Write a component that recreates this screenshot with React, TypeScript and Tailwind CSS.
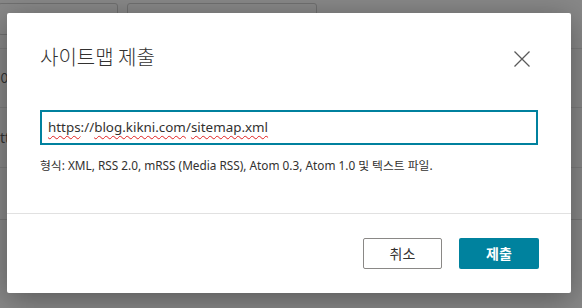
const wavy = "underline decoration-wavy decoration-[#e02020] decoration-1 underline-offset-[3px]";

export default function App() {
    return (
        <div className="relative w-[582px] h-[308px] overflow-hidden bg-[#888888] font-['Noto_Sans','Noto_Sans_CJK_KR',sans-serif]">
            {/* page behind the overlay */}
            <div className="flex flex-col">
                <div className="flex h-[49px] items-start gap-[9px] border-b border-[#7c7c7c] pt-[3px]">
                    <div className="-ml-[2px] h-[32px] w-[120px] rounded-[3px] border border-[#707070]" />
                    <div className="h-[32px] w-[190px] rounded-[3px] border border-[#707070]" />
                </div>
                <div className="flex h-[59px] items-center border-b border-[#7c7c7c] text-[14px] text-[#333]">
                    <span>이트</span>
                </div>
                <div className="flex h-[60px] items-center border-b border-[#7c7c7c] text-[14px] text-[#333]">
                    <span>tt</span>
                </div>
                <div className="h-[52px] border-b border-[#777]" />
            </div>

            {/* dialog */}
            <div className="absolute left-[7px] top-[13px] flex h-[280px] w-[564px] flex-col rounded-[2px] bg-white shadow-[0_6px_30px_rgba(0,0,0,0.35)]">
                <div className="flex h-[200px] flex-col px-[33px] pt-[30px]">
                    <div className="flex h-[28px] items-center justify-between">
                        <h2 className="font-['Noto_Sans_CJK_KR',sans-serif] text-[20px] font-light leading-[28px] text-[#323130]">사이트맵 제출</h2>
                        <button className="mr-[8px] mt-[4px] flex h-[16px] w-[16px] items-center justify-center text-[#5a5a5a]">
                            <svg width="16" height="16" viewBox="0 0 16 16" fill="none" stroke="currentColor" strokeWidth="1.3">
                                <path d="M0.5 0.5 L15.5 15.5 M15.5 0.5 L0.5 15.5" />
                            </svg>
                        </button>
                    </div>
                    <div className="mt-[39px] flex h-[35px] items-center border-2 border-[#00819e] px-[6px] text-[13.4px] text-[#323130]">
                        <span className={wavy}>https</span>
                        <span>://</span>
                        <span className={wavy}>blog.kikni.com</span>
                        <span>/</span>
                        <span className={wavy}>sitemap.xml</span>
                    </div>
                    <p className="mt-[12px] text-[11.8px] leading-[16px] text-[#323130]">
                        형식: XML, RSS 2.0, mRSS (Media RSS), Atom 0.3, Atom 1.0 및 텍스트 파일.
                    </p>
                </div>
                <div className="flex flex-1 items-start justify-end gap-[17px] border-t border-[#e1e1e1] px-[32px] pt-[24px]">
                    <button className="h-[31px] w-[79px] rounded-[2px] border border-[#8a8886] bg-white font-['Noto_Sans_CJK_KR',sans-serif] text-[14px] text-[#323130]">
                        취소
                    </button>
                    <button className="h-[31px] w-[80px] rounded-[2px] bg-[#00829e] font-['Noto_Sans_CJK_KR',sans-serif] text-[14px] font-bold text-white">
                        제출
                    </button>
                </div>
            </div>
        </div>
    );
}
